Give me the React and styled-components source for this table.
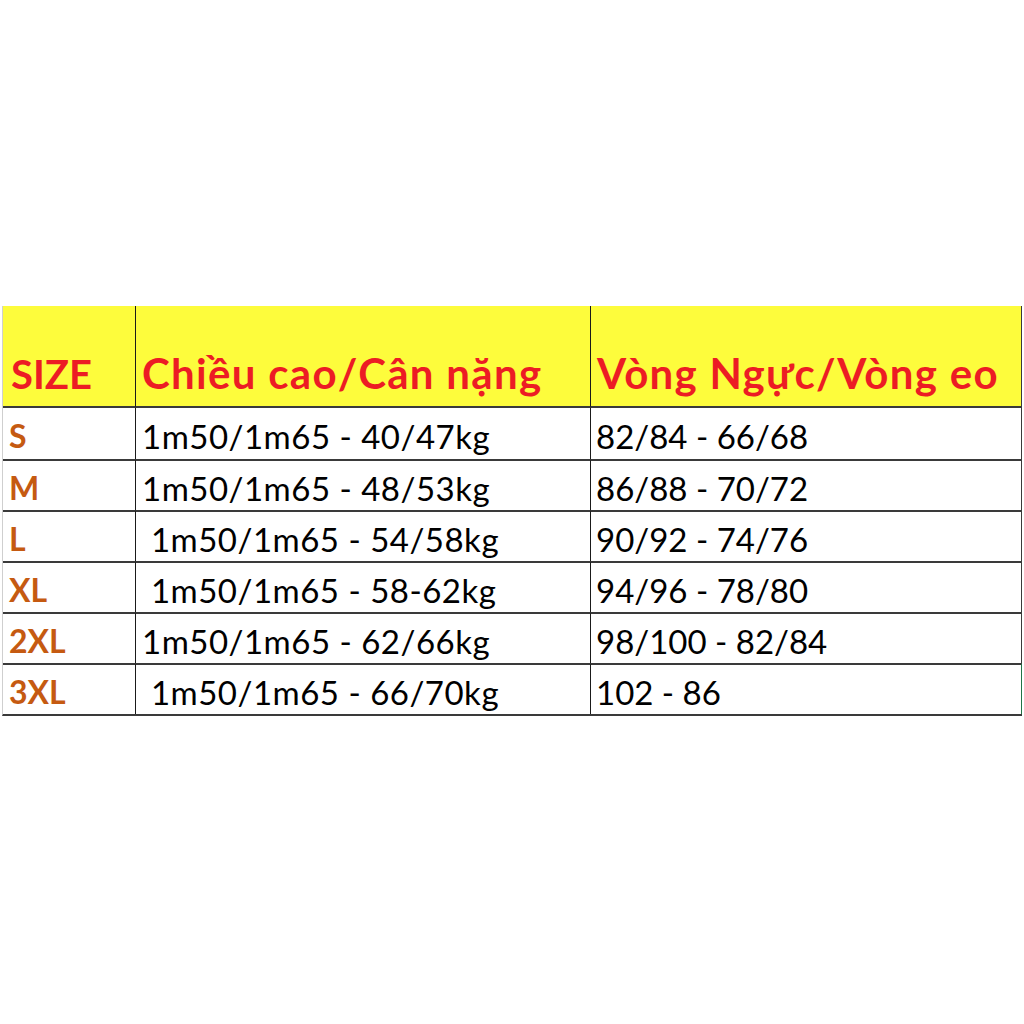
import React from 'react';
import styled, { createGlobalStyle } from 'styled-components';

const GlobalStyle = createGlobalStyle`
  html, body {
    margin: 0;
    padding: 0;
    background: #ffffff;
  }
`;

const Page = styled.div`
  width: 1024px;
  height: 1024px;
  padding-top: 306px;
  box-sizing: border-box;
  font-family: Lato, "Open Sans", sans-serif;
`;

const Table = styled.div`
  margin-left: 2px;
  width: 1019px;
  display: grid;
  grid-template-columns: 132px 455px 432px;
  border-left: 1px solid #cfcfcf;
  border-bottom: 2px solid #3a3a3a;
`;

const HeadCell = styled.div`
  height: 102px;
  box-sizing: border-box;
  background: #fdfc3c;
  color: #ec1c24;
  font-weight: 700;
  font-size: ${(p) => (p.$tight ? 40 : 42)}px;
  letter-spacing: ${(p) => (p.$tight ? 0 : 1.3)}px;
  display: flex;
  align-items: flex-end;
  padding: 0 0 8px ${(p) => p.$pad}px;
  border-left: ${(p) => (p.$first ? 'none' : '1.5px solid #1a1a1a')};
  border-right: ${(p) => (p.$last ? '1.5px solid #3a3a3a' : 'none')};
  border-bottom: 2px solid #3a3a3a;
  white-space: nowrap;
`;

const Cell = styled.div`
  height: 51px;
  box-sizing: border-box;
  display: flex;
  align-items: center;
  padding-left: ${(p) => p.$pad}px;
  padding-top: 4px;
  font-size: ${(p) => (p.$size ? 32 : 33)}px;
  letter-spacing: ${(p) => p.$ls || 0}px;
  color: ${(p) => (p.$size ? '#c55a11' : '#000000')};
  font-weight: ${(p) => (p.$size ? 700 : 400)};
  border-left: ${(p) => (p.$first ? 'none' : '1.5px solid #1a1a1a')};
  border-right: ${(p) => (p.$last ? `1.5px solid ${p.$green ? '#217346' : '#3a3a3a'}` : 'none')};
  border-top: ${(p) => (p.$top ? 'none' : '2px solid #3a3a3a')};
  white-space: pre;
`;

const rows = [
  { size: 'S', hw: '1m50/1m65 - 40/47kg', chest: '82/84 - 66/68' },
  { size: 'M', hw: '1m50/1m65 - 48/53kg', chest: '86/88 - 70/72' },
  { size: 'L', hw: ' 1m50/1m65 - 54/58kg', chest: '90/92 - 74/76' },
  { size: 'XL', hw: ' 1m50/1m65 - 58-62kg', chest: '94/96 - 78/80' },
  { size: '2XL', hw: '1m50/1m65 - 62/66kg', chest: '98/100 - 82/84' },
  { size: '3XL', hw: ' 1m50/1m65 - 66/70kg', chest: '102 - 86' },
];

export default function App() {
  return (
    <>
      <GlobalStyle />
      <Page>
        <Table>
          <HeadCell $first $tight $pad={8}>SIZE</HeadCell>
          <HeadCell $pad={6}>Chiều cao/Cân nặng</HeadCell>
          <HeadCell $last $pad={6}>Vòng Ngực/Vòng eo</HeadCell>
          {rows.map((r, i) => (
            <React.Fragment key={r.size}>
              <Cell $first $size $pad={6} $top={i === 0}>{r.size}</Cell>
              <Cell $pad={6} $ls={0.5} $top={i === 0}>{r.hw}</Cell>
              <Cell $last $pad={5} $ls={0} $top={i === 0} $green={i === rows.length - 1}>
                {r.chest}
              </Cell>
            </React.Fragment>
          ))}
        </Table>
      </Page>
    </>
  );
}
